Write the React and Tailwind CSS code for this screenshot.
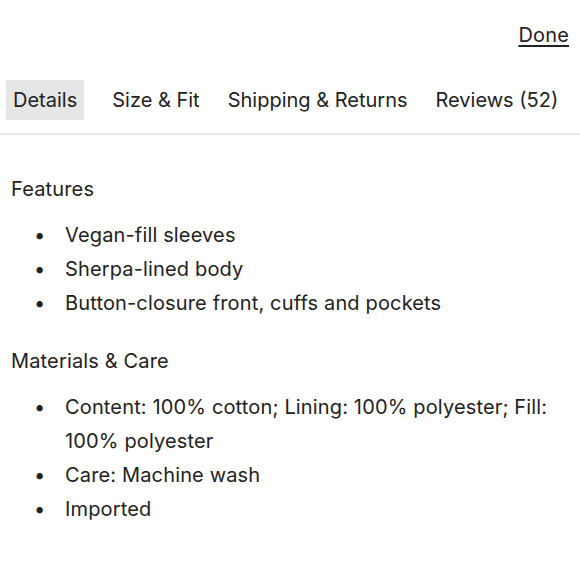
export default function App() {
  const features = ["Vegan-fill sleeves", "Sherpa-lined body", "Button-closure front, cuffs and pockets"];
  const care = ["Content: 100% cotton; Lining: 100% polyester; Fill: 100% polyester", "Care: Machine wash", "Imported"];
  const Item = ({ children }) => (
    <li className="flex">
      <span className="w-[54px] shrink-0 pl-[23px]">•</span>
      <span className="pr-[4px]">{children}</span>
    </li>
  );
  return (
    <div className="w-[580px] h-[580px] bg-white text-[#222] text-[20px] leading-[34px] tracking-[0.15px]" style={{ fontFamily: "Inter, 'Noto Sans', sans-serif" }}>
      <div className="flex justify-end pt-[20px] pr-[11px] h-[80px]">
        <span className="underline underline-offset-[3px] text-[20px] leading-[30px]">Done</span>
      </div>
      <div className="flex items-center h-[40px] pl-[6px] text-[20px] tracking-[0px]">
        <div className="h-[40px] px-[7px] flex items-center bg-[#e6e6e6]">Details</div>
        <div className="ml-[28px]">Size &amp; Fit</div>
        <div className="ml-[28px]">Shipping &amp; Returns</div>
        <div className="ml-[28px]">Reviews (52)</div>
      </div>
      <div className="mt-[13px] h-[2px] bg-[#e8e8e8]" />
      <div className="pl-[11px] pt-[37px]">
        <div>Features</div>
        <ul className="mt-[12px]">
          {features.map((f) => <Item key={f}>{f}</Item>)}
        </ul>
        <div className="mt-[24px]">Materials &amp; Care</div>
        <ul className="mt-[12px]">
          {care.map((f) => <Item key={f}>{f}</Item>)}
        </ul>
      </div>
    </div>
  );
}
